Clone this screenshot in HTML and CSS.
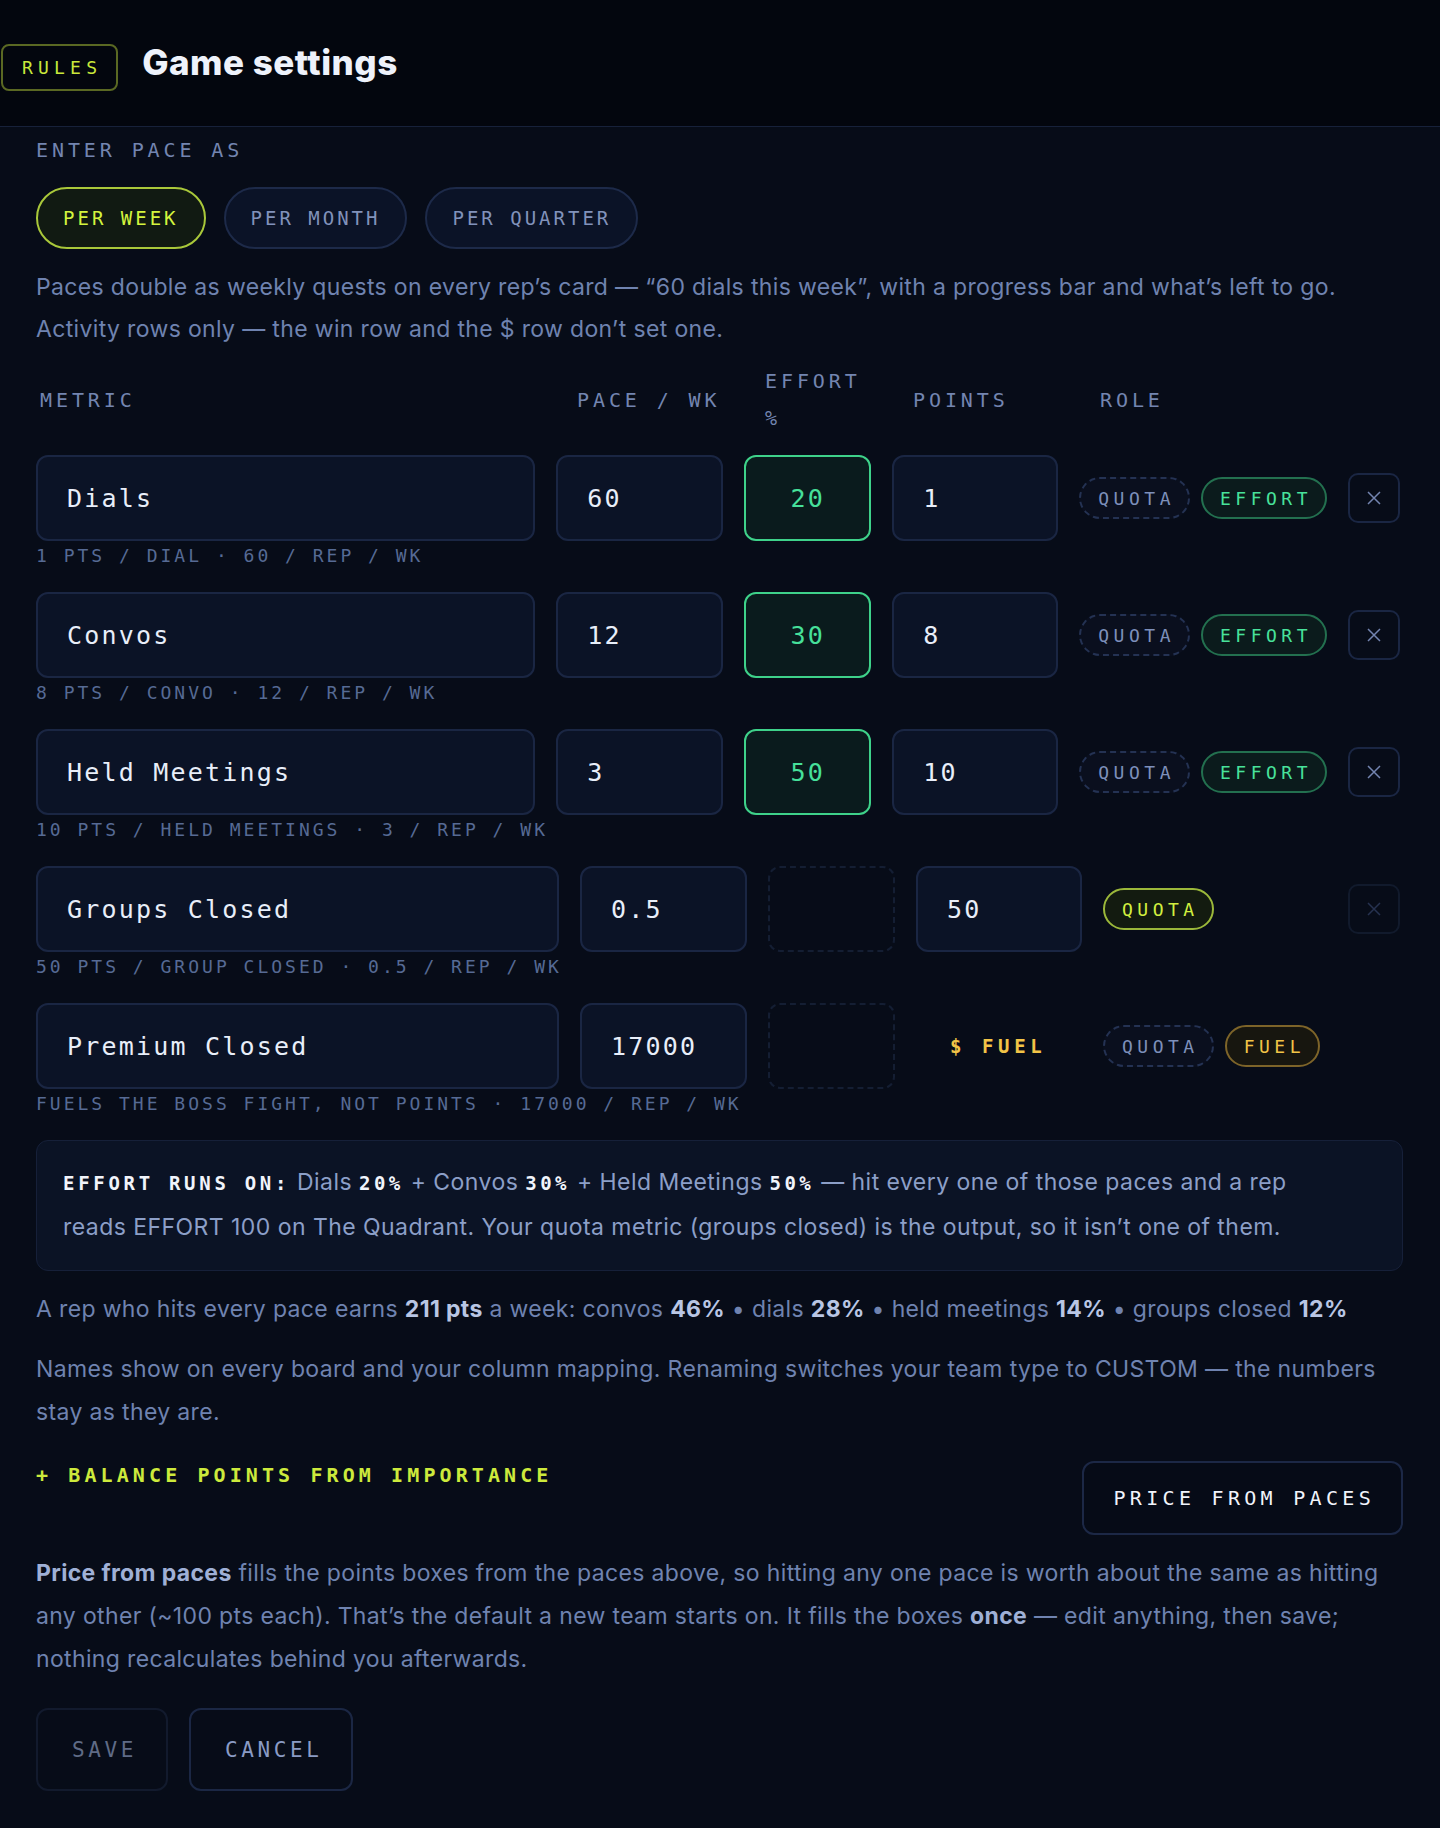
FILE: index.html
```html
<!DOCTYPE html>
<html lang="en">
<head>
  <meta charset="UTF-8">
  <title>Game settings</title>
  <meta name="viewport" content="width=device-width, initial-scale=1.0">
  <link rel="stylesheet" href="styles.css">
</head>
<body>

  <header class="topbar">
    <span class="tag">RULES</span>
    <h1 class="title">Game settings</h1>
  </header>

  <main class="panel">
    <div class="label first">ENTER PACE AS</div>
    <div class="seg">
      <button class="seg-btn on">PER WEEK</button>
      <button class="seg-btn">PER MONTH</button>
      <button class="seg-btn">PER QUARTER</button>
    </div>
    <p class="note first-note">Paces double as weekly quests on every rep’s card — “60 dials this week”, with a progress bar and what’s left to go.<br>Activity rows only — the win row and the $ row don’t set one.</p>

    <div class="row head">
      <div class="col-name label">METRIC</div>
      <div class="col-pace label pad">PACE / WK</div>
      <div class="col-eff label pad">EFFORT %</div>
      <div class="col-pts label pad">POINTS</div>
      <div class="col-role role-head label pad">ROLE</div>
      <div class="col-del"></div>
    </div>

    <div class="metric">
      <div class="row">
        <input class="box col-name" value="Dials">
        <input class="box col-pace" value="60">
        <input class="box col-eff eff-on" value="20">
        <input class="box col-pts" value="1">
        <div class="col-role">
          <span class="chip">QUOTA</span>
          <span class="chip chip-effort">EFFORT</span>
        </div>
        <button class="del"><svg width="18" height="18" viewBox="0 0 18 18"><path d="M3 3L15 15M15 3L3 15"/></svg></button>
      </div>
      <div class="sub">1 PTS / DIAL · 60 / REP / WK</div>
    </div>

    <div class="metric">
      <div class="row">
        <input class="box col-name" value="Convos">
        <input class="box col-pace" value="12">
        <input class="box col-eff eff-on" value="30">
        <input class="box col-pts" value="8">
        <div class="col-role">
          <span class="chip">QUOTA</span>
          <span class="chip chip-effort">EFFORT</span>
        </div>
        <button class="del"><svg width="18" height="18" viewBox="0 0 18 18"><path d="M3 3L15 15M15 3L3 15"/></svg></button>
      </div>
      <div class="sub">8 PTS / CONVO · 12 / REP / WK</div>
    </div>

    <div class="metric">
      <div class="row">
        <input class="box col-name" value="Held Meetings">
        <input class="box col-pace" value="3">
        <input class="box col-eff eff-on" value="50">
        <input class="box col-pts" value="10">
        <div class="col-role">
          <span class="chip">QUOTA</span>
          <span class="chip chip-effort">EFFORT</span>
        </div>
        <button class="del"><svg width="18" height="18" viewBox="0 0 18 18"><path d="M3 3L15 15M15 3L3 15"/></svg></button>
      </div>
      <div class="sub">10 PTS / HELD MEETINGS · 3 / REP / WK</div>
    </div>

    <div class="metric">
      <div class="row">
        <input class="box col-name" value="Groups Closed">
        <input class="box col-pace" value="0.5">
        <div class="col-eff eff-empty"></div>
        <input class="box col-pts" value="50">
        <div class="col-role">
          <span class="chip chip-quota">QUOTA</span>
        </div>
        <button class="del off"><svg width="18" height="18" viewBox="0 0 18 18"><path d="M3 3L15 15M15 3L3 15"/></svg></button>
      </div>
      <div class="sub">50 PTS / GROUP CLOSED · 0.5 / REP / WK</div>
    </div>

    <div class="metric">
      <div class="row">
        <input class="box col-name" value="Premium Closed">
        <input class="box col-pace" value="17000">
        <div class="col-eff eff-empty"></div>
        <div class="col-pts fuel-note">$ FUEL</div>
        <div class="col-role">
          <span class="chip">QUOTA</span>
          <span class="chip chip-fuel">FUEL</span>
        </div>
        <div class="col-del"></div>
      </div>
      <div class="sub">FUELS THE BOSS FIGHT, NOT POINTS · 17000 / REP / WK</div>
    </div>

    <div class="info">
      <span class="key">EFFORT RUNS ON:</span> Dials <span class="num">20%</span> + Convos <span class="num">30%</span> + Held Meetings <span class="num">50%</span> — hit every one of those paces and a rep reads EFFORT 100 on The Quadrant. Your quota metric (groups closed) is the output, so it isn’t one of them.
    </div>

    <p class="note stat">A rep who hits every pace earns <b>211 pts</b> a week: convos <b>46%</b> • dials <b>28%</b> • held meetings <b>14%</b> • groups closed <b>12%</b></p>

    <p class="note names">Names show on every board and your column mapping. Renaming switches your team type to CUSTOM — the numbers stay as they are.</p>

    <div class="tools">
      <button class="balance">+ BALANCE POINTS FROM IMPORTANCE</button>
      <button class="price-btn">PRICE FROM PACES</button>
    </div>

    <p class="note explain"><b>Price from paces</b> fills the points boxes from the paces above, so hitting any one pace is worth about the same as hitting any other (~100 pts each). That’s the default a new team starts on. It fills the boxes <b>once</b> — edit anything, then save; nothing recalculates behind you afterwards.</p>

    <div class="footer-btns">
      <button class="ghost save">SAVE</button>
      <button class="ghost">CANCEL</button>
    </div>
  </main>

</body>
</html>
```

FILE: styles.css
```css
body { margin: 0; background: #070c18; color: #6f83b0; font-family: Inter, "Open Sans", sans-serif; }
button { cursor: pointer; }

/* top bar */
.topbar { height: 127px; box-sizing: border-box; display: flex; align-items: flex-start; gap: 24px; padding-top: 44px; background: #03060e; border-bottom: 1px solid #17213a; }
.tag { height: 47px; box-sizing: border-box; display: inline-flex; align-items: center; margin-left: 1px; padding: 0 14px 0 19px; border: 2px solid #5a6823; border-radius: 8px; color: #c9e83b; font: 18px/1 "DejaVu Sans Mono", monospace; letter-spacing: 5.2px; }
.title { margin: -3px 0 0; font: 800 35px/42px Inter, sans-serif; letter-spacing: 0.5px; color: #eef2fb; }

.panel { padding: 0 37px 40px 36px; }

.label { font: 20px/24px "DejaVu Sans Mono", monospace; letter-spacing: 3.9px; color: #7385b0; }
.label.first { margin-top: 11px; }

/* pace unit switch */
.seg { display: flex; gap: 18px; margin-top: 25px; }
.seg-btn { height: 62px; padding: 0 25px; border-radius: 31px; border: 2px solid #1d2a49; background: #0b1327; color: #8192bb; font: 19px "DejaVu Sans Mono", monospace; letter-spacing: 3px; }
.seg-btn.on { border-color: #a9c83a; background: #111a12; color: #d4f43e; }

.note { margin: 17px 0 0; font-size: 23px; line-height: 42px; letter-spacing: 0.35px; }
.note b { color: #b9c6e4; font-weight: 700; }

/* metric table */
.row { display: flex; gap: 21px; height: 86px; margin-right: 3px; align-items: stretch; }
.row.head { height: 74px; margin-top: 13px; margin-bottom: 18px; align-items: center; }
.row.head .label { line-height: 37px; }
.row.head .pad { padding-left: 20px; box-sizing: border-box; }
.row.head .col-name { padding-left: 4px; }

.col-name { flex: 1; width: 0; min-width: 0; }
.col-pace { width: 167px; flex: none; }
.col-eff { width: 127px; flex: none; }
.col-pts { width: 166px; flex: none; }
.col-role { min-width: 224px; flex: none; display: flex; align-items: center; gap: 11px; }
.role-head { width: 247px; }
.col-del { width: 52px; flex: none; }

.box { box-sizing: border-box; height: 86px; padding: 0 0 0 29px; border: 2px solid #1a2643; border-radius: 12px; background: #0b1326; color: #e8eef9; font: 25px "DejaVu Sans Mono", monospace; letter-spacing: 2.2px; outline: none; }
.box.eff-on { padding: 0; text-align: center; border-color: #3ed28a; background: #0a1b1d; color: #46e09a; }
.eff-empty { box-sizing: border-box; border: 2px dashed #141e33; border-radius: 12px; }
.fuel-note { display: flex; align-items: center; padding-left: 34px; box-sizing: border-box; color: #f2c447; font: bold 19px "DejaVu Sans Mono", monospace; letter-spacing: 4.6px; }

.chip { height: 42px; box-sizing: border-box; display: inline-flex; align-items: center; padding: 0 13px 0 17px; border: 2px dashed #243253; border-radius: 21px; background: #0a0f1e; color: #7d8fba; font: 18px "DejaVu Sans Mono", monospace; letter-spacing: 4.5px; }
.chip-effort { border-style: solid; border-color: #23704f; background: #0b1b1c; color: #48e29b; }
.chip-quota { border-style: solid; border-color: #9bb83a; background: #131b10; color: #d2ef3f; }
.chip-fuel { border-style: solid; border-color: #7d6429; background: #17160f; color: #f2c447; }

.del { width: 52px; height: 50px; flex: none; align-self: center; display: flex; align-items: center; justify-content: center; padding: 0; border: 2px solid #1a2643; border-radius: 10px; background: #070c18; }
.del svg path { stroke: #7384b0; stroke-width: 1.5; }
.del.off { border-color: #111a2c; }
.del.off svg path { stroke: #263250; }

.metric { margin-bottom: 25px; }
.sub { margin-top: 4px; font: 18px/22px "DejaVu Sans Mono", monospace; letter-spacing: 3px; color: #566a94; }

/* effort summary */
.info { margin-top: 1px; padding: 19px 64px 21px 26px; border: 1px solid #162039; border-radius: 12px; background: #0b1325; font-size: 23px; line-height: 44px; letter-spacing: 0.45px; color: #8c9fc8; }
.info .key, .info .num { font-family: "DejaVu Sans Mono", monospace; font-size: 19px; font-weight: bold; color: #f1f4fb; }
.info .key { letter-spacing: 3.7px; }
.info .num { letter-spacing: 3.5px; }

.stat { margin-top: 17px; }
.names { margin-top: 18px; line-height: 43px; }

.tools { display: flex; justify-content: space-between; align-items: flex-start; margin-top: 27px; }
.balance { margin-top: 2px; padding: 0; border: 0; background: none; color: #cdea3c; font: bold 20px/24px "DejaVu Sans Mono", monospace; letter-spacing: 4.1px; }
.price-btn { height: 74px; padding: 0 26px 0 30px; border: 2px solid #1c2846; border-radius: 12px; background: #060b17; color: #f1f4fb; font: 20px "DejaVu Sans Mono", monospace; letter-spacing: 4.3px; }

.explain { margin-top: 17px; line-height: 43px; }
.explain b { color: #9fb0d6; }

.footer-btns { display: flex; gap: 21px; margin-top: 27px; }
.ghost { height: 83px; padding: 0 29px 0 34px; border: 2px solid #1b2744; border-radius: 12px; background: transparent; color: #8a9bc5; font: 21px "DejaVu Sans Mono", monospace; letter-spacing: 3.6px; }
.ghost.save { border-color: #121a2d; color: #5f6b86; }
```
